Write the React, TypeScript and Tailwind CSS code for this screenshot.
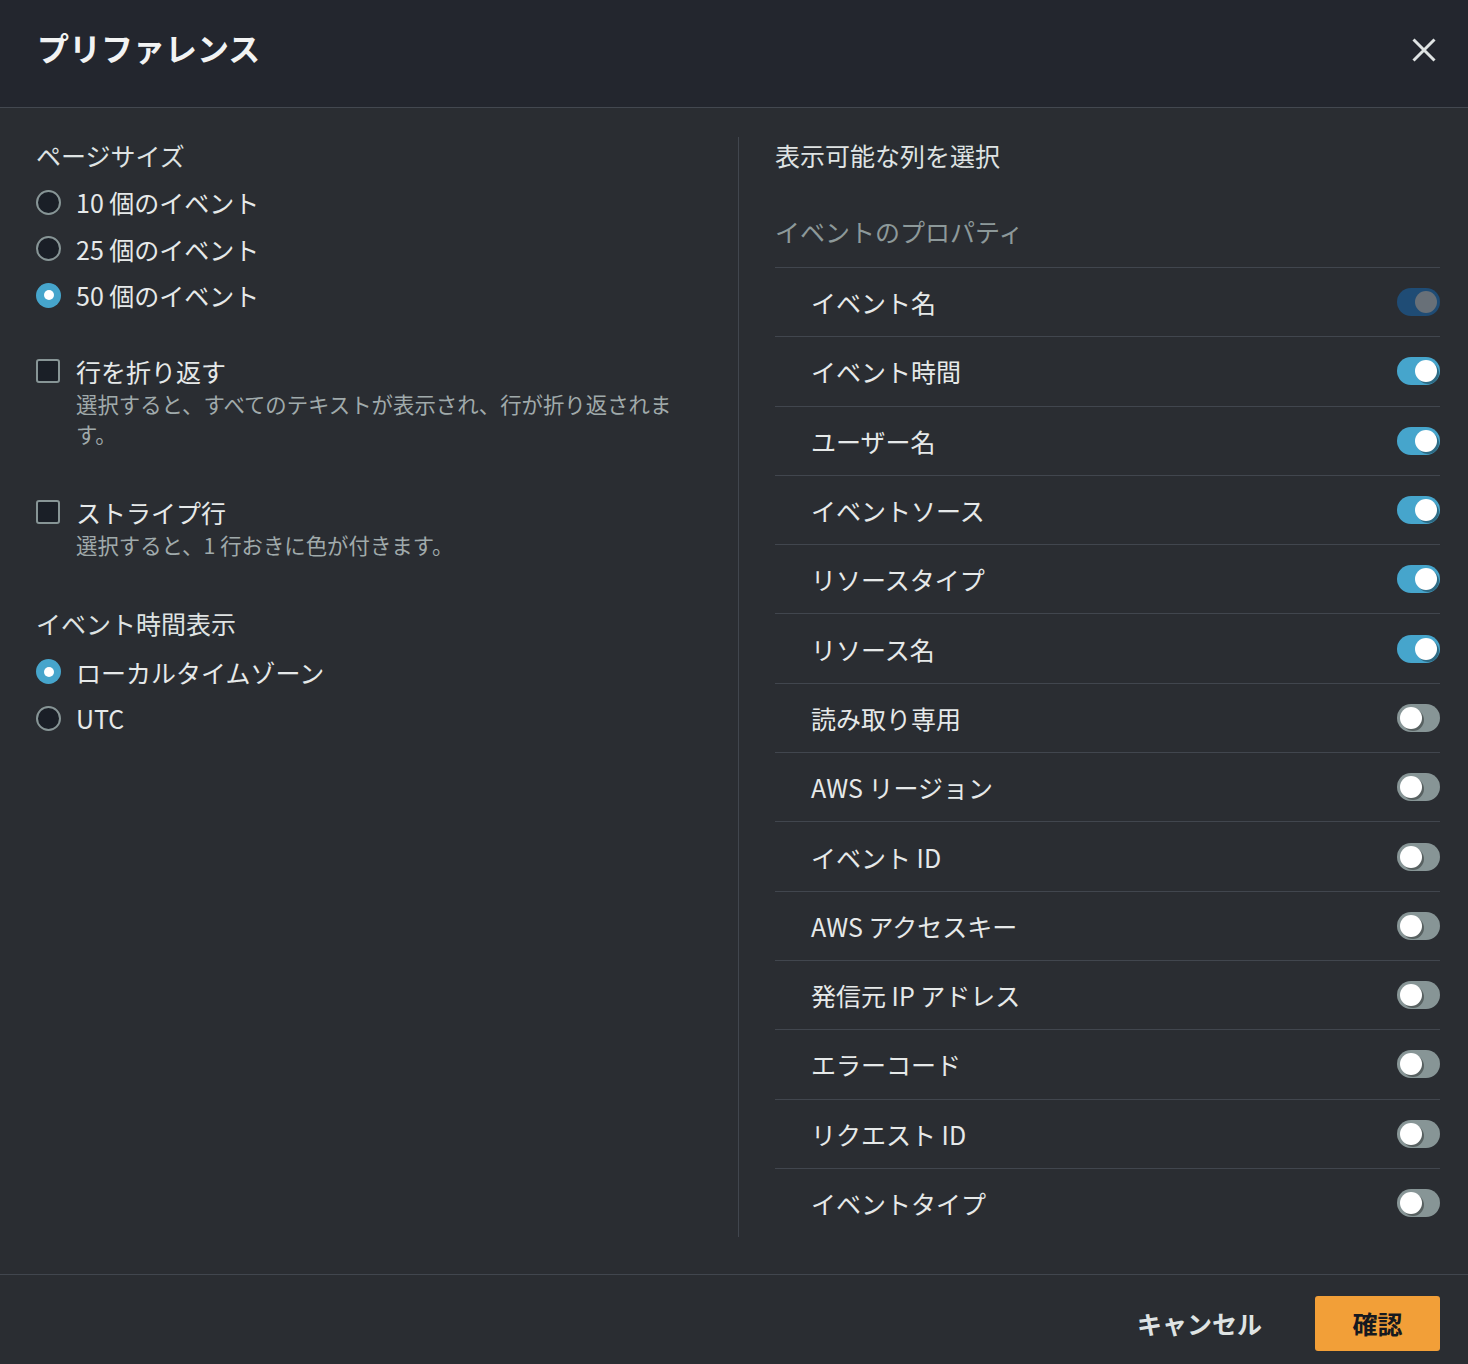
import type { ReactNode } from "react";

const font = { fontFamily: '"Noto Sans CJK JP", "Noto Sans", sans-serif' };

type Col = { label: string; state: "locked" | "on" | "off" };

const columns: Col[] = [
  { label: "イベント名", state: "locked" },
  { label: "イベント時間", state: "on" },
  { label: "ユーザー名", state: "on" },
  { label: "イベントソース", state: "on" },
  { label: "リソースタイプ", state: "on" },
  { label: "リソース名", state: "on" },
  { label: "読み取り専用", state: "off" },
  { label: "AWS リージョン", state: "off" },
  { label: "イベント ID", state: "off" },
  { label: "AWS アクセスキー", state: "off" },
  { label: "発信元 IP アドレス", state: "off" },
  { label: "エラーコード", state: "off" },
  { label: "リクエスト ID", state: "off" },
  { label: "イベントタイプ", state: "off" },
];

function Radio({ checked, children }: { checked?: boolean; children: ReactNode }) {
  return (
    <div className="flex h-[46.5px] items-center gap-[15px]">
      {checked ? (
        <span className="flex h-[25px] w-[25px] items-center justify-center rounded-full bg-[#46a5cc]">
          <span className="h-[10px] w-[10px] rounded-full bg-white" />
        </span>
      ) : (
        <span className="h-[25px] w-[25px] rounded-full border-2 border-[#879596] bg-[#1a1f27]" />
      )}
      <span className="text-[25px] leading-[36px] text-[#e6e9e9]">{children}</span>
    </div>
  );
}

function Check({ label, desc, className }: { label: string; desc: ReactNode; className?: string }) {
  return (
    <div className={className}>
      <div className="flex items-center gap-[16px]">
        <span className="h-[24px] w-[24px] rounded-[3px] border-2 border-[#879596] bg-[#1a1f27]" />
        <span className="text-[25px] leading-[36px] text-[#e6e9e9]">{label}</span>
      </div>
      <p className="pl-[40px] text-[21.4px] leading-[30px] text-[#a0aaab]">{desc}</p>
    </div>
  );
}

function Toggle({ state }: { state: Col["state"] }) {
  if (state === "locked") {
    return (
      <span className="flex h-[28px] w-[43px] items-center justify-end rounded-full bg-[#1f4c75] pr-[3px]">
        <span className="h-[22px] w-[22px] rounded-full bg-[#687078]" />
      </span>
    );
  }
  const on = state === "on";
  return (
    <span
      className={
        on
          ? "flex h-[28px] w-[43px] items-center justify-end rounded-full bg-[#46a5cc] pr-[3px]"
          : "flex h-[28px] w-[43px] items-center justify-start rounded-full bg-[#879596] pl-[3px]"
      }
    >
      <span className="h-[22px] w-[22px] rounded-full bg-white shadow-[2px_2px_0_rgba(0,0,0,0.35)]" />
    </span>
  );
}

export default function App() {
  return (
    <div className="min-h-screen w-full bg-[#2a2d32]" style={font}>
      {/* header */}
      <div className="flex h-[108px] items-start justify-between border-b border-[#434850] bg-[#23262e] pl-[37px] pr-[32px] pt-[29px]">
        <h1 className="text-[32px] font-bold leading-[36px] text-[#f2f3f3]">プリファレンス</h1>
        <svg width="24" height="24" viewBox="0 0 24 24" className="mt-[9px]">
          <path d="M1.5 1.5 22.5 22.5M22.5 1.5 1.5 22.5" stroke="#dfe3e3" strokeWidth="3" />
        </svg>
      </div>

      {/* body */}
      <div className="flex pb-[37px] pt-[29px]">
        <div className="w-[700px] shrink-0 pl-[36px] pr-[14px]">
          <div className="mb-[6px] text-[25px] leading-[36px] text-[#dfe3e3]">ページサイズ</div>
          <Radio>10 個のイベント</Radio>
          <Radio>25 個のイベント</Radio>
          <Radio checked>50 個のイベント</Radio>

          <Check
            className="mt-[34px]"
            label="行を折り返す"
            desc="選択すると、すべてのテキストが表示され、行が折り返されます。"
          />
          <Check className="mt-[45px]" label="ストライプ行" desc="選択すると、1 行おきに色が付きます。" />

          <div className="mt-[45px] text-[25px] leading-[36px] text-[#dfe3e3]">イベント時間表示</div>
          <div className="mt-[8px]">
            <Radio checked>ローカルタイムゾーン</Radio>
            <Radio>UTC</Radio>
          </div>
        </div>

        <div className="ml-[38px] w-px shrink-0 bg-[#41464e]" />

        <div className="flex-1 pl-[36px] pr-[28px]">
          <div className="text-[25px] leading-[36px] text-[#dfe3e3]">表示可能な列を選択</div>
          <div className="mt-[40px] text-[25px] leading-[36px] text-[#8d999a]">イベントのプロパティ</div>
          <div className="mt-[18px]">
            {columns.map((c) => (
              <div
                key={c.label}
                className="flex h-[69.3px] items-center justify-between border-t border-[#41464e] pl-[36px]"
              >
                <span className="text-[25px] leading-[36px] text-[#e6e9e9]">{c.label}</span>
                <Toggle state={c.state} />
              </div>
            ))}
          </div>
        </div>
      </div>

      {/* footer */}
      <div className="flex items-start justify-end gap-[53px] border-t border-[#41464e] pr-[28px] pt-[21px]">
        <button className="h-[55px] text-[25px] font-bold text-[#dfe3e3]">キャンセル</button>
        <button className="h-[55px] w-[125px] rounded-[3px] bg-[#f29f38] text-[25px] font-bold text-[#16191f]">
          確認
        </button>
      </div>
    </div>
  );
}
